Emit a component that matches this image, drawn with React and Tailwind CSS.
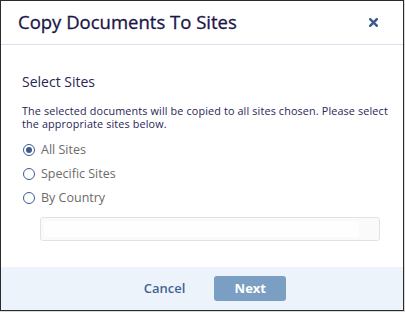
export default function App() {
  const options = ["All Sites", "Specific Sites", "By Country"];
  const selected = "All Sites";

  return (
    <div className="w-[405px] h-[312px] bg-[#d9d9d9] font-['Open_Sans',sans-serif]">
      <div className="w-[404px] h-[311px] bg-white border border-[#2b2b2b] flex flex-col">
        {/* Header */}
        <div className="h-[44px] flex items-center justify-between pl-[17px] pr-[25px] border-b border-[#d6e1ec]">
          <h1 className="text-[18.5px] text-[#1b1548] leading-none [-webkit-text-stroke:0.3px_#1b1548]">Copy Documents To Sites</h1>
          <button className="text-[#3d5b8c]">
            <svg width="9" height="9" viewBox="0 0 9 9" className="block">
              <path d="M1.3 1.3 L7.7 7.7 M7.7 1.3 L1.3 7.7" stroke="currentColor" strokeWidth="2.5" strokeLinecap="square" />
            </svg>
          </button>
        </div>

        {/* Body */}
        <div className="flex-1 px-[21px] pt-[30px]">
          <h2 className="text-[14px] text-[#2a2557] leading-none">Select Sites</h2>
          <p className="mt-[15px] -mr-[8px] text-[10.8px] tracking-[0.14px] leading-[13px] text-[#2a2557]">
            The selected documents will be copied to all sites chosen. Please select the appropriate sites below.
          </p>
          <div className="mt-[11px] flex flex-col gap-[6px] pl-[1px]">
            {options.map((o) => (
              <label key={o} className="flex items-center gap-[6px] h-[18px]">
                <span className="w-[12px] h-[12px] rounded-full border border-[#3d5b8c] flex items-center justify-center">
                  {o === selected && <span className="w-[6px] h-[6px] rounded-full bg-[#3d5b8c]" />}
                </span>
                <span className="text-[12.5px] text-[#6b6b6b]">{o}</span>
              </label>
            ))}
          </div>
          <div className="mt-[10px] ml-[18px] w-[340px] h-[24px] rounded-[3px] border border-[#e2e2e2] bg-[#fafafa] p-[3px] pr-[20px]">
            <div className="h-full bg-white/70 rounded-[2px]" />
          </div>
        </div>

        {/* Footer */}
        <div className="h-[43px] bg-[#edf3fa] flex items-center justify-center gap-[29px] pl-[26px]">
          <button className="text-[13px] font-semibold text-[#3f6495]">Cancel</button>
          <button className="w-[72px] h-[25px] rounded-[3px] bg-[#7b9fc3] text-white text-[13px] font-bold">Next</button>
        </div>
      </div>
    </div>
  );
}
